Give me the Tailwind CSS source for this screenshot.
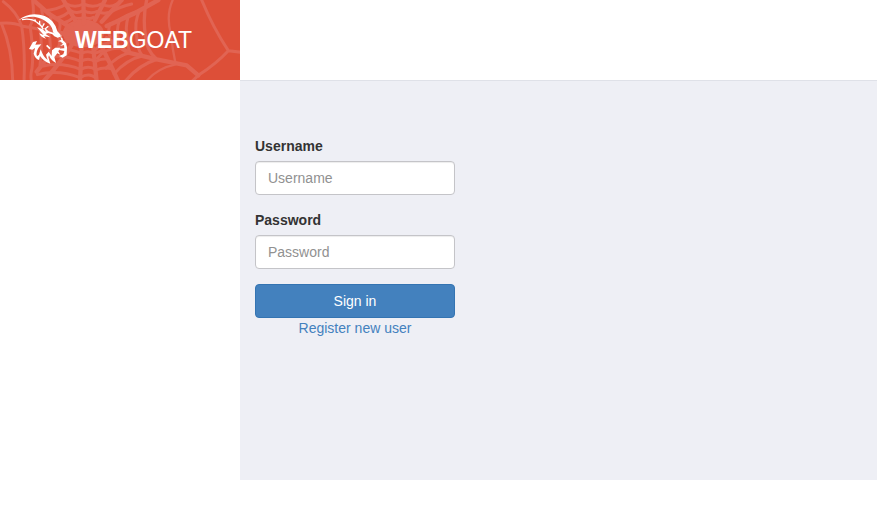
<!DOCTYPE html>
<html lang="en">
<head>
  <meta charset="UTF-8" />
  <meta name="viewport" content="width=device-width, initial-scale=1" />
  <title>Login Page</title>
  <script src="https://cdn.jsdelivr.net/npm/@tailwindcss/browser@4"></script>
</head>
<body class="bg-white text-sm leading-5 text-[#333] font-['Liberation_Sans',Arial,sans-serif]">
  <header class="flex h-20">
    <div class="relative w-60 shrink-0 overflow-hidden bg-[#dd4f38]">
      <svg class="absolute inset-0 size-full" viewBox="0 0 720 240" fill="none" aria-hidden="true">
        <!-- spider web: outer threads, then the denser middle -->
        <g stroke="#e16453" stroke-width="9" stroke-linecap="round" stroke-linejoin="round">
          <path d="M605 0Q640 85 685 152L725 157M685 152Q650 190 595 226L575 245" />
          <path d="M518 0Q498 45 512 100Q518 150 527 193Q470 205 438 245" stroke-width="7" />
          <path d="M440 0Q428 50 436 105Q438 150 470 178Q415 195 375 245" stroke-width="10" />
          <path d="M0 70Q40 66 65 78Q50 35 10 5M5 72Q38 150 38 245M65 78Q76 150 72 245M65 78L120 88" />
        </g>
        <ellipse cx="250" cy="100" rx="62" ry="42" fill="#e16453" />
        <g stroke="#e16453" stroke-width="13" stroke-linecap="round" stroke-linejoin="round">
          <path d="M475 0L400 42L320 78M365 0L305 65M315 0L285 60M250 0L252 70M190 0L225 60M100 0L145 40L215 85M120 88L215 105" />
          <path d="M320 115L385 158L470 178L560 196L595 226M300 130Q335 200 355 245M280 145L290 245M245 140L240 245M215 135Q180 190 130 245M205 120Q150 160 110 215" />
        </g>
        <g stroke="#e16453" stroke-width="9" stroke-linecap="round" stroke-linejoin="round">
          <path d="M418 32Q382 42 347 66M395 12Q360 20 328 38M418 32Q402 70 410 105Q410 145 427 168Q380 178 342 222M385 48Q374 85 383 115Q382 140 390 158Q350 168 318 205" />
          <path d="M358 62Q348 90 356 115Q350 135 355 145Q315 145 292 175M330 72Q322 92 330 110L325 130Q305 130 285 150" />
          <path d="M98 5Q105 55 90 78Q102 155 96 205Q90 228 95 245M125 30Q132 60 120 88Q128 140 120 195M150 42Q157 65 145 92Q155 130 148 170M178 60Q184 82 174 100Q182 125 175 148" />
          <path d="M132 32Q170 30 200 12Q225 25 250 12Q280 25 304 12Q330 25 350 12M168 55Q194 49 211 32Q230 43 250 32Q272 43 292 34Q310 43 323 38M190 68Q208 66 220 51Q237 60 252 51Q268 59 280 52" />
          <path d="M175 148Q208 145 246 160Q262 150 283 160Q298 155 312 150M150 170Q195 165 243 184Q265 171 286 185Q305 175 322 178M130 198Q185 186 242 208Q268 194 288 210Q310 200 337 207M112 224Q175 208 240 233Q268 216 289 235" />
        </g>
        <!-- goat head -->
        <g fill="#fff">
          <path d="M56 61Q74 44 103 43Q138 43 157 64Q169 78 172 94L182 104L171 107L159 97Q157 80 145 70Q128 54 102 50Q75 49 56 61Z" />
          <path d="M160 98L187 108L173 113Q161 110 157 103L145 99L137 102L151 112L132 109L138 116Q121 112 118 100L131 105L120 92L111 82L127 87L137 96L134 83L146 94Z" />
          <path d="M181 110L187 114L189 121L198 130L201 142L200 166L188 173L177 168L190 163L193 153L179 150L174 146L193 145L192 135L180 138L189 131L182 125L174 124L184 119Z" />
          <path d="M111 123L99 126L87 147L97 149L105 144L101 161Q105 176 117 180L120 168Q132 185 151 191L145 172L147 166Q153 182 168 189L163 171L172 160L181 164L175 154L181 143L166 143L156 151L155 168L146 155L138 164L143 180Q130 172 122 148L117 164L111 169Q105 154 124 133L106 134Z" />
        </g>
        <path d="M66 59Q93 54 111 67Q124 75 130 88M104 58L108 66M119 62L119 74M133 70L127 81M145 79L134 88" stroke="#fff" stroke-width="4" />
        <path d="M140 136L150 146" stroke="#fff" stroke-width="5" />
      </svg>
      <a href="#" class="relative flex h-full items-center pl-[75px] text-[23px] leading-6 text-white"><b>WEB</b>GOAT</a>
    </div>
  </header>

  <main class="ml-60 min-h-[400px] border-t border-[#dfe1e8] bg-[#eeeff5] px-[15px] pt-[55px]">
    <form class="w-[200px]">
      <div class="mb-[15px]">
        <label for="username" class="mb-[5px] block font-bold">Username</label>
        <input type="text" id="username" name="username" placeholder="Username"
          class="block h-[34px] w-full rounded border border-[#c4c4c8] bg-white px-3 py-1.5 shadow-[inset_0_1px_1px_rgba(0,0,0,0.075)] placeholder:text-[#919191]" />
      </div>
      <div class="mb-[15px]">
        <label for="password" class="mb-[5px] block font-bold">Password</label>
        <input type="password" id="password" name="password" placeholder="Password"
          class="block h-[34px] w-full rounded border border-[#c4c4c8] bg-white px-3 py-1.5 shadow-[inset_0_1px_1px_rgba(0,0,0,0.075)] placeholder:text-[#919191]" />
      </div>
      <button type="submit" class="block h-[34px] w-full rounded border border-[#3474b2] bg-[#4381be] text-white">Sign in</button>
      <a href="#" class="block text-center text-[#4381be]">Register new user</a>
    </form>
  </main>
</body>
</html>
